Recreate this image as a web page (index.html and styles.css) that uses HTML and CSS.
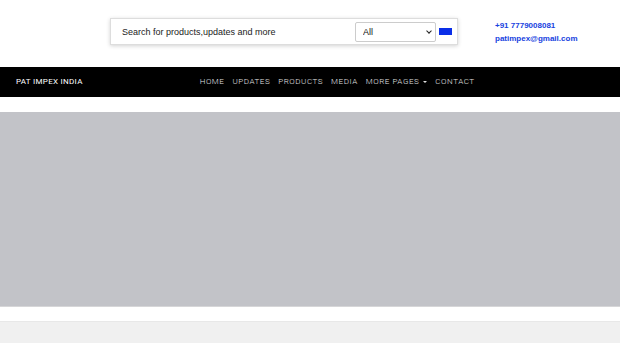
FILE: index.html
```html
<!DOCTYPE html>
<html lang="en">

<head>
    <meta charset="UTF-8">
    <meta name="viewport" content="width=device-width, initial-scale=1.0">
    <title>Pat Impex India</title>
    <link rel="stylesheet" href="styles.css">
</head>

<body>
    <header class="top-bar">
        <form class="search-box">
            <input type="text" class="search-input" placeholder="Search for products,updates and more">
            <span class="select-wrap">
                <select class="search-select">
                    <option>All</option>
                    <option>Products</option>
                    <option>Updates</option>
                </select>
            </span>
            <button type="submit" class="search-button"></button>
        </form>
        <div class="contact">
            <a href="#">+91 7779008081</a>
            <a href="#">patimpex@gmail.com</a>
        </div>
    </header>

    <nav class="navbar">
        <a href="#" class="brand">PAT IMPEX INDIA</a>
        <ul class="menu">
            <li><a href="#">HOME</a></li>
            <li><a href="#">UPDATES</a></li>
            <li><a href="#">PRODUCTS</a></li>
            <li><a href="#">MEDIA</a></li>
            <li><a href="#">MORE PAGES <span class="caret"></span></a></li>
            <li><a href="#">CONTACT</a></li>
        </ul>
    </nav>

    <div class="banner"></div>
    <div class="gap"></div>
    <div class="section"></div>
</body>

</html>
```

FILE: styles.css
```css
* {
    margin: 0;
    padding: 0;
    box-sizing: border-box;
}

body {
    font-family: "Liberation Sans", Arial, sans-serif;
    background-color: #fff;
}

a {
    text-decoration: none;
}

.top-bar {
    height: 67px;
    display: flex;
    align-items: flex-start;
    padding-left: 110px;
}

.search-box {
    margin-top: 18px;
    width: 348px;
    height: 27px;
    display: flex;
    align-items: center;
    border: 1px solid #ddd;
    box-shadow: 0 1px 4px rgba(0, 0, 0, 0.18);
    background-color: #fff;
}

.search-input {
    flex: 1;
    border: none;
    outline: none;
    padding-left: 11px;
    font-family: "Liberation Sans", Arial, sans-serif;
    font-size: 9px;
    color: #222;
}

.search-input::placeholder {
    color: #222;
}

.select-wrap {
    position: relative;
    display: block;
}

.select-wrap::after {
    content: "";
    position: absolute;
    right: 5px;
    top: 7px;
    width: 3px;
    height: 3px;
    border-right: 1px solid #222;
    border-bottom: 1px solid #222;
    transform: rotate(45deg);
    pointer-events: none;
}

.search-select {
    display: block;
    appearance: none;
    width: 81px;
    height: 20px;
    border: 1px solid #ccc;
    border-radius: 2px;
    background-color: #fff;
    font-family: "Liberation Sans", Arial, sans-serif;
    font-size: 9px;
    padding-left: 7px;
    color: #111;
}

.search-button {
    width: 13px;
    height: 7px;
    margin: 0 5px 0 3px;
    border: none;
    background-color: #0a2ee8;
}

.contact {
    margin-top: 20px;
    margin-left: 37px;
    display: flex;
    flex-direction: column;
    gap: 2px;
}

.contact a {
    color: #1742e0;
    font-size: 8px;
    line-height: 11px;
    font-weight: bold;
}

.navbar {
    height: 30px;
    background-color: #000;
    display: flex;
    align-items: center;
    padding-left: 16px;
    font-family: Roboto, "Liberation Sans", sans-serif;
}

.brand {
    color: #fff;
    font-size: 8px;
    letter-spacing: 0.3px;
    line-height: 10px;
}

.menu {
    list-style: none;
    display: flex;
    align-items: center;
    gap: 8px;
    margin-left: 117px;
}

.menu a {
    display: flex;
    align-items: center;
    color: #e0e0e0;
    font-size: 8px;
    font-weight: 300;
    letter-spacing: 0.55px;
    line-height: 10px;
}

.caret {
    width: 0;
    height: 0;
    border-left: 2px solid transparent;
    border-right: 2px solid transparent;
    border-top: 2px solid #e0e0e0;
    margin-left: 4px;
}

.banner {
    margin-top: 15px;
    height: 195px;
    background-color: #c2c3c8;
    border-bottom: 1px solid #d6d6d8;
}

.gap {
    height: 15px;
    border-bottom: 1px solid #e8e8e8;
}

.section {
    height: 30px;
    background-color: #f0f0f0;
}
```
